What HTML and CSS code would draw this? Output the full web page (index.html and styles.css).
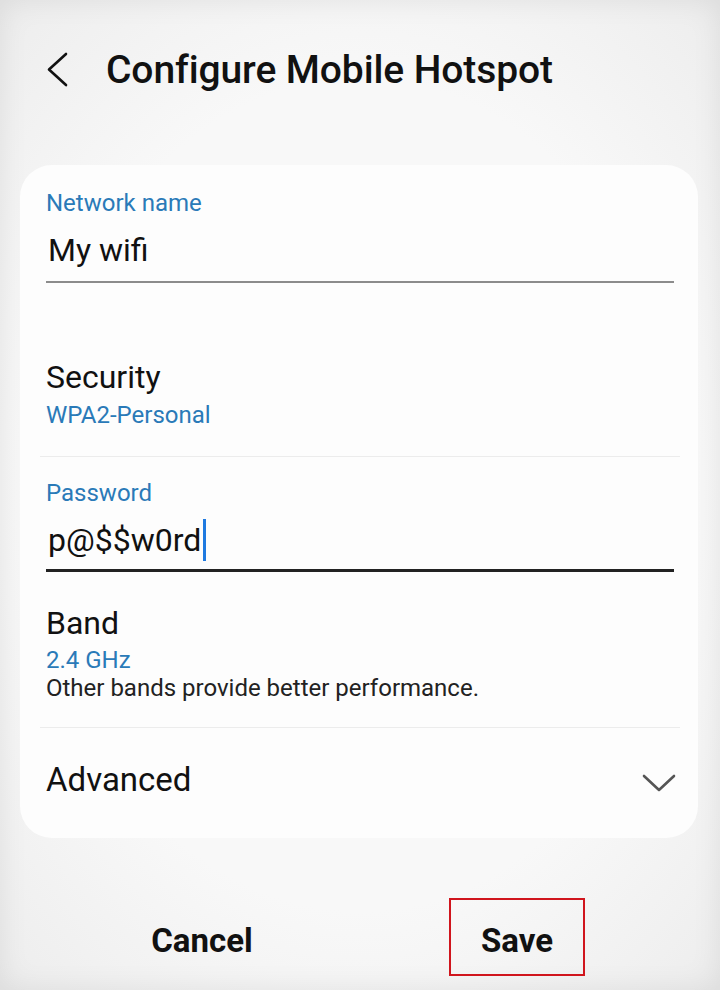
FILE: index.html
```html
<!DOCTYPE html>
<html lang="en">
<head>
<meta charset="utf-8">
<title>Configure Mobile Hotspot</title>
<link rel="stylesheet" href="styles.css">
</head>
<body>
<div class="screen">
  <header class="header">
    <svg class="back" width="24" height="36" viewBox="0 0 24 36" aria-hidden="true">
      <path d="M20 2 L3 17.5 L20 33" fill="none" stroke="#111" stroke-width="2.6" stroke-linecap="round" stroke-linejoin="round"/>
    </svg>
    <h1 class="title">Configure Mobile Hotspot</h1>
  </header>

  <main class="card">
    <section class="field field-name">
      <div class="label">Network name</div>
      <div class="value">My wifi</div>
      <div class="underline"></div>
    </section>

    <section class="row row-security">
      <div class="row-title">Security</div>
      <div class="row-sub">WPA2-Personal</div>
    </section>

    <section class="field field-pass">
      <div class="label">Password</div>
      <div class="value">p@$$w0rd<span class="cursor"></span></div>
      <div class="underline active"></div>
    </section>

    <section class="row row-band">
      <div class="row-title">Band</div>
      <div class="row-sub">2.4 GHz</div>
      <div class="row-note">Other bands provide better performance.</div>
    </section>

    <section class="row row-adv">
      <div class="row-title">Advanced</div>
      <svg class="chev" width="36" height="20" viewBox="0 0 36 20" aria-hidden="true">
        <path d="M3 2 L18 16 L33 2" fill="none" stroke="#555" stroke-width="2.6" stroke-linecap="round" stroke-linejoin="round"/>
      </svg>
    </section>
  </main>

  <footer class="actions">
    <div class="btn btn-cancel">Cancel</div>
    <div class="btn btn-save">Save</div>
  </footer>
</div>
</body>
</html>
```

FILE: styles.css
```css
* { box-sizing: border-box; }
html, body { margin: 0; padding: 0; }
body {
  font-family: Roboto, "Noto Sans", "Liberation Sans", sans-serif;
  color: #111;
  background: #f4f4f4;
}
.screen {
  width: 720px;
  height: 990px;
  overflow: hidden;
  background: radial-gradient(ellipse 75% 70% at 50% 50%, #f8f8f8 60%, #ececec 100%);
  box-shadow: inset 0 0 30px rgba(0,0,0,0.08);
}

.header {
  height: 165px;
  display: flex;
  align-items: flex-start;
  padding: 48px 0 0 46px;
}
.back {
  margin-top: 4px;
  flex: none;
}
.title {
  margin: 0 0 0 36px;
  font-size: 39px;
  line-height: 44px;
  font-weight: 500;
  letter-spacing: -0.1px;
  color: #111;
}

.card {
  margin: 0 22px 0 20px;
  background: #fdfdfd;
  border-radius: 32px;
  padding: 0 24px 40px 26px;
}

.label {
  font-size: 24px;
  line-height: 28px;
  color: #2a7ab8;
}
.value {
  font-size: 32px;
  line-height: 36px;
  height: 36px;
  color: #111;
  margin-top: 15px;
  padding-left: 2px;
  display: flex;
  align-items: center;
}
.underline {
  height: 2px;
  background: #8c8c8c;
  margin-top: 13px;
}
.underline.active {
  height: 3px;
  background: #222;
  margin-top: 11px;
}
.cursor {
  display: inline-block;
  flex: none;
  width: 3px;
  height: 42px;
  margin: -3px 0 -3px 2px;
  background: #1f7ae0;
}

.field-name { padding-top: 24px; }
.field-pass { padding-top: 22px; }

.row-title {
  font-size: 32px;
  line-height: 36px;
  color: #111;
}
.row-sub {
  font-size: 24px;
  line-height: 28px;
  color: #2a7ab8;
}
.row-note {
  font-size: 24px;
  line-height: 28px;
  color: #222;
}

.row-security {
  margin-top: 76px;
  padding-bottom: 27px;
  border-bottom: 1px solid #ececec;
  margin-left: -6px;
  margin-right: -6px;
  padding-left: 6px;
  padding-right: 6px;
}
.row-security .row-sub { margin-top: 6px; }

.row-band {
  margin-top: 33px;
  padding-bottom: 25px;
  border-bottom: 1px solid #ececec;
  margin-left: -6px;
  margin-right: -6px;
  padding-left: 6px;
  padding-right: 6px;
}
.row-band .row-sub { margin-top: 5px; }

.row-adv {
  padding-top: 34px;
  display: flex;
  justify-content: space-between;
  align-items: flex-start;
}
.row-adv .row-title { font-size: 33px; }
.chev {
  margin-top: 12px;
  margin-right: -3px;
}

.actions {
  margin-top: 60px;
  display: flex;
  padding-left: 134px;
  gap: 179px;
}
.btn {
  width: 136px;
  height: 78px;
  padding-top: 23px;
  text-align: center;
  font-size: 33px;
  line-height: 40px;
  font-weight: 700;
  color: #111;
}
.btn-save {
  border: 2px solid #d0151d;
  padding-top: 21px;
}
```
